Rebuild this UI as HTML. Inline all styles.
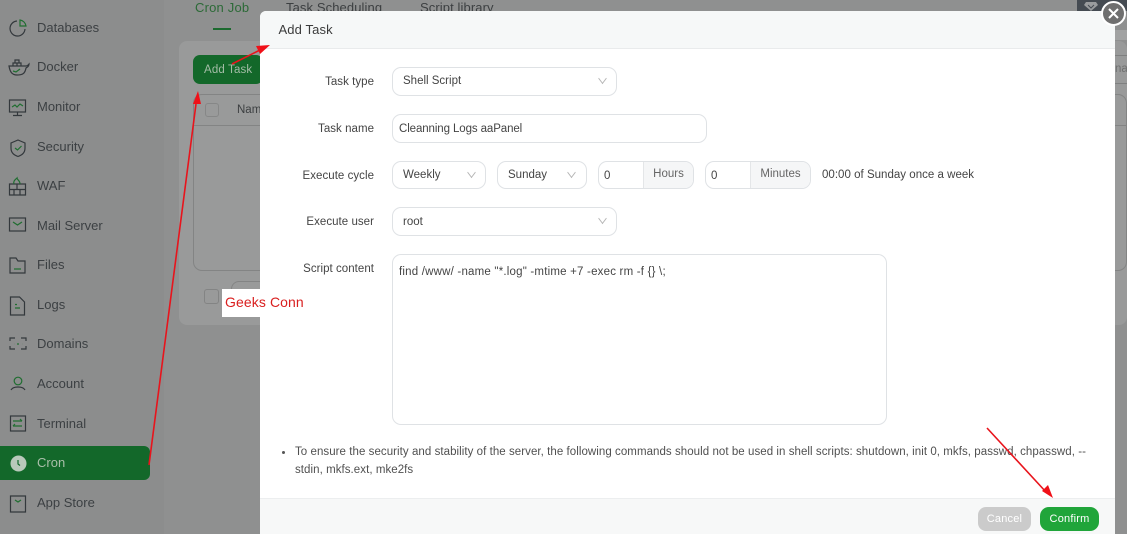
<!DOCTYPE html>
<html><head><meta charset="utf-8">
<style>
html,body{margin:0;padding:0}
body{width:1127px;height:534px;overflow:hidden;position:relative;background:#8f9090;font-family:"Liberation Sans",sans-serif;color:#444}
.a,.a *,.box,.box *{box-sizing:border-box}
.a{position:absolute;white-space:nowrap}
.nav{position:absolute;left:37px;font-size:13px;letter-spacing:0;color:#3c4043;line-height:16px}
.lb{font-size:11.5px;letter-spacing:.04px;color:#444;text-align:right;width:114px;left:260px;line-height:14px;position:absolute}
.box{position:absolute;background:#fff;border:1px solid #dfe2e5;border-radius:9px;font-size:11.5px;letter-spacing:0;color:#444;height:29px;line-height:27px;white-space:nowrap}
.ch{position:absolute;width:7px;height:7px;border-right:1px solid #b5b5b5;border-bottom:1px solid #b5b5b5;transform:rotate(45deg) skew(8deg,8deg)}
.ad{position:absolute;background:#f5f6f7;border-left:1px solid #e4e6e8;text-align:center;color:#666}
</style></head>
<body>
<!-- background sidebar -->
<div class="a" style="left:0;top:0;width:164px;height:534px;background:#8c8d8d"></div>
<div class="a" style="left:0;top:446px;width:150px;height:34px;background:#13682a;border-radius:0 6px 6px 0"></div>

<div class="nav" style="top:20px">Databases</div>
<div class="nav" style="top:59px">Docker</div>
<div class="nav" style="top:99px">Monitor</div>
<div class="nav" style="top:139px">Security</div>
<div class="nav" style="top:178px">WAF</div>
<div class="nav" style="top:218px">Mail Server</div>
<div class="nav" style="top:257px">Files</div>
<div class="nav" style="top:297px">Logs</div>
<div class="nav" style="top:336px">Domains</div>
<div class="nav" style="top:376px">Account</div>
<div class="nav" style="top:416px">Terminal</div>
<div class="nav" style="top:455px;color:#a9bfa9">Cron</div>
<div class="nav" style="top:495px">App Store</div>

<svg class="a" style="left:0;top:0" width="36" height="534" fill="none" stroke="#33383c" stroke-width="1.2">
<path d="M17 21a7.500 7.500 0 1 0 8 8"/><path d="M20 20v6h6a7 7 0 0 0-6-6z" stroke="#1f6e30"/>
<path d="M9 66h17c2 0 2-1 3-2 0 3-2 3-3 4-1 6-4 7-9 7-5 0-7-3-8-9z"/><path d="M13 66v-3h4v3M17 66v-3h4v3M15 63v-3h4v3"/><path d="M13 71l3 1 4-3" stroke="#1f6e30"/>
<rect x="9.500" y="100" width="16" height="12"/><path d="M17.500 112v3M13 115.500h9"/><path d="M12 107l3-2 2 2 3-3 3 2" stroke="#1f6e30"/>
<path d="M18 140l7 3v5c0 5-3 7-7 8.500-4-1.500-7-3.500-7-8.500v-5z"/><path d="M15 148l2.500 2 4-4" stroke="#1f6e30"/>
<path d="M9.500 184h16v11h-16zM9.500 189.500h16M17 184v5.500M14 189.500v5.500M20 189.500v5.500"/><path d="M14 184c-1-3 1-4 3-6 0 2 3 2 3 6" stroke="#1f6e30"/>
<rect x="9.500" y="218" width="16" height="13"/><path d="M13 222l4.500 3 4.500-3" stroke="#1f6e30"/>
<path d="M10 258h6l2 3h7v12H10z"/><path d="M14 269h7" stroke="#1f6e30"/>
<path d="M10.500 297h9l5 5v13h-14z"/><path d="M15 304.500h2M15 308h5" stroke="#1f6e30"/>
<path d="M10 341v-3h5M21 338h5v3M10 346v3h5M21 349h5v-3"/><path d="M14 344h.1M18 343v2M22 344h.1" stroke="#1f6e30"/>
<circle cx="18" cy="381" r="3.800" stroke="#1f6e30"/><path d="M11 390c2-4 12-4 14 0"/>
<rect x="10.500" y="416" width="15" height="15"/><path d="M13 421h9M20 419l2 2M13 426h9M15 424l-2 2" stroke="#1f6e30"/>
<path d="M10.500 496h15v16h-15z"/><path d="M15 500l3 2 3-2" stroke="#1f6e30"/>
</svg>
<svg class="a" style="left:8px;top:454px" width="20" height="20"><circle cx="10.500" cy="9.500" r="8" fill="#b9c9bb"/><path d="M10 6v4l2 1.500" stroke="#13682a" stroke-width="1.200" fill="none"/></svg>

<!-- background main -->
<div class="a" style="left:195px;top:0;font-size:13px;letter-spacing:.2px;color:#2c6a37;line-height:15px">Cron Job</div>
<div class="a" style="left:213px;top:28px;width:18px;height:2px;background:#1c6a2f"></div>
<div class="a" style="left:286px;top:0;font-size:13px;letter-spacing:.1px;color:#3c3f41;line-height:15px">Task Scheduling</div>
<div class="a" style="left:420px;top:0;font-size:13px;letter-spacing:.1px;color:#3c3f41;line-height:15px">Script library</div>
<div class="a" style="left:179px;top:41px;width:948px;height:284px;background:#999a9a;border-radius:8px"></div>
<div class="a" style="left:193px;top:55px;width:70px;height:29px;background:#13682a;border-radius:7px;color:#a3bca6;font-size:11.5px;line-height:30px;padding-left:11px;letter-spacing:.15px">Add Task</div>
<div class="a" style="left:193px;top:94px;width:934px;height:177px;border:1px solid #838484;border-radius:9px"></div>
<div class="a" style="left:193px;top:125px;width:934px;height:1px;background:#838484"></div>
<div class="a" style="left:205px;top:103px;width:14px;height:14px;border:1px solid #868787;border-radius:3px"></div>
<div class="a" style="left:237px;top:103px;font-size:11.5px;color:#3c3f41;line-height:14px">Name</div>
<div class="a" style="left:204px;top:289px;width:15px;height:15px;border:1px solid #838484;border-radius:3px"></div>
<div class="a" style="left:231px;top:281px;width:40px;height:30px;border:1px solid #838484;border-radius:8px"></div>
<div class="a" style="left:222px;top:289px;width:40px;height:28px;background:#fff"></div>
<div class="a" style="left:1077px;top:0;width:50px;height:11px;background:#454b52"></div>
<svg class="a" style="left:1084px;top:1px" width="15" height="10"><path d="M2 1h10l2 3-7 6-7-6z" fill="#9a9c9e"/><path d="M4 4l3 3 3-3" stroke="#454b52" fill="none"/></svg>
<div class="a" style="left:1115px;top:30px;width:12px;height:10px;background:#a1a2a2"></div>
<div class="a" style="left:1115px;top:55px;width:12px;height:1px;background:#7f8080"></div>
<div class="a" style="left:1115px;top:83px;width:12px;height:1px;background:#7f8080"></div>
<div class="a" style="left:1115px;top:62px;font-size:11.5px;color:#6f7070;line-height:14px">na</div>

<!-- modal -->
<div class="a" style="left:260px;top:11px;width:855px;height:523px;background:#fff;border-radius:6px 0 0 0;overflow:hidden">
  <div class="a" style="left:0;top:0;width:855px;height:38px;background:#f6f8f8;border-bottom:1px solid #e9ebec"></div>
  <div class="a" style="left:18.500px;top:11px;font-size:13px;letter-spacing:.12px;color:#3b3b3b;line-height:15px">Add Task</div>
  <div class="a" style="left:0;top:487px;width:855px;height:36px;background:#f7f8f8;border-top:1px solid #eceeef"></div>
</div>
<div class="a" style="left:225px;top:294px;font-size:14px;letter-spacing:.1px;color:#d91f1f;line-height:16px">Geeks Conn</div>

<div class="lb" style="top:75px">Task type</div>
<div class="lb" style="top:122px">Task name</div>
<div class="lb" style="top:169px">Execute cycle</div>
<div class="lb" style="top:215px">Execute user</div>
<div class="lb" style="top:262px">Script content</div>

<div class="box" style="left:392px;top:67px;width:225px;padding-left:10px">Shell Script<i class="ch" style="left:206px;top:7px"></i></div>
<div class="box" style="left:392px;top:114px;width:315px;padding-left:6px;line-height:29px;letter-spacing:-.1px">Cleanning Logs aaPanel</div>
<div class="box" style="left:392px;top:161px;width:94px;height:28px;padding-left:10px">Weekly<i class="ch" style="left:75px;top:7px"></i></div>
<div class="box" style="left:497px;top:161px;width:90px;height:28px;padding-left:10px">Sunday<i class="ch" style="left:70px;top:7px"></i></div>
<div class="box" style="left:598px;top:161px;width:96px;height:28px;padding-left:5px;overflow:hidden;line-height:28px">0<div class="ad" style="left:44px;top:0;width:50px;height:26px;line-height:24px">Hours</div></div>
<div class="box" style="left:705px;top:161px;width:106px;height:28px;padding-left:5px;overflow:hidden;line-height:28px">0<div class="ad" style="left:44px;top:0;width:60px;height:26px;line-height:24px">Minutes</div></div>
<div class="a" style="left:822px;top:168px;font-size:11.5px;letter-spacing:.02px;color:#444;line-height:14px">00:00 of Sunday once a week</div>
<div class="box" style="left:392px;top:207px;width:225px;padding-left:10px;line-height:29px">root<i class="ch" style="left:206px;top:7px"></i></div>
<div class="box" style="left:392px;top:254px;width:495px;height:171px;padding:10px 0 0 6px;line-height:14px;letter-spacing:.2px">find /www/ -name "*.log" -mtime +7 -exec rm -f {} \;</div>

<div class="a" style="left:282px;top:451px;width:3px;height:3px;border-radius:50%;background:#555"></div>
<div class="a" style="left:295px;top:443px;font-size:11.5px;letter-spacing:.055px;color:#505050;line-height:18px">To ensure the security and stability of the server, the following commands should not be used in shell scripts: shutdown, init 0, mkfs, passwd, chpasswd, --<br>stdin, mkfs.ext, mke2fs</div>

<div class="a" style="left:978px;top:507px;width:53px;height:24px;background:#cbcbcb;border-radius:8px;color:#fff;font-size:11px;text-align:center;line-height:25px;letter-spacing:.2px">Cancel</div>
<div class="a" style="left:1040px;top:507px;width:59px;height:24px;background:#20a53a;border-radius:9px;color:#fff;font-size:11px;text-align:center;line-height:25px;letter-spacing:.2px">Confirm</div>

<!-- close -->
<div class="a" style="left:1101px;top:1px;width:25px;height:25px;border-radius:50%;background:#6f6f6f;border:2px solid #fff"></div>
<svg class="a" style="left:1101px;top:1px" width="25" height="25"><path d="M8 8l9 9M17 8l-9 9" stroke="#fff" stroke-width="2"/></svg>

<!-- arrows -->
<svg class="a" style="left:0;top:0" width="1127" height="534">
<path d="M149 465L196 104" stroke="#e8141c" stroke-width="1.600" fill="none"/>
<path d="M198 91l-5 13h8z" fill="#f01018"/>
<path d="M232 64L262 49" stroke="#e8141c" stroke-width="1.600" fill="none"/>
<path d="M270 45l-14 1 4 8z" fill="#f01018"/>
<path d="M987 428L1046 492" stroke="#e8141c" stroke-width="1.600" fill="none"/>
<path d="M1053 498l-5-13-6 6z" fill="#f01018"/>
</svg>
</body></html>
